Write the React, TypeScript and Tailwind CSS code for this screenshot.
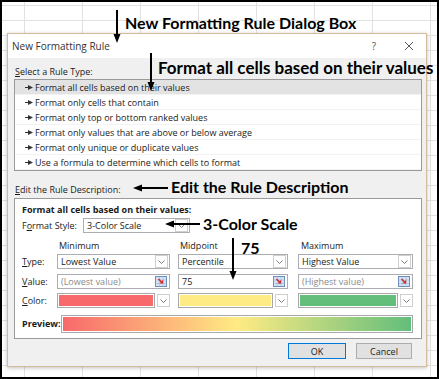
import React from "react";

const rules = [
  "Format all cells based on their values",
  "Format only cells that contain",
  "Format only top or bottom ranked values",
  "Format only values that are above or below average",
  "Format only unique or duplicate values",
  "Use a formula to determine which cells to format",
];

const Chevron = () => (
  <svg width="7" height="4" viewBox="0 0 7 4" fill="none">
    <polyline points="0.5,0.5 3.5,3.5 6.5,0.5" stroke="#707070" strokeWidth="0.9" />
  </svg>
);

const DropButton = () => (
  <span className="flex h-[13px] w-[13px] shrink-0 items-center justify-center border border-[#cfcfcf] bg-white">
    <Chevron />
  </span>
);

const RangeIcon = () => (
  <span className="flex h-[13px] w-[14px] shrink-0 items-center justify-center">
    <svg width="12" height="11" viewBox="0 0 12 11">
      <rect x="0.5" y="0.5" width="11" height="10" fill="#d6e4f5" stroke="#6c8cbc" />
      <path d="M0.5 4h11M0.5 7.5h11M4.2 0.5v10M8 0.5v10" stroke="#9fb6d8" strokeWidth="0.6" />
      <path d="M3.5 3l4 4" stroke="#d42a2a" strokeWidth="1.6" />
      <path d="M8.2 3.8v3.6H4.6z" fill="#d42a2a" />
    </svg>
  </span>
);

const Dropdown = ({ text, w }: { text: string; w: string }) => (
  <div className={`flex h-[15px] items-center border border-[#abadb3] bg-white pl-[3px] pr-px ${w}`}>
    <span className="flex-1 whitespace-nowrap leading-[13px]">{text}</span>
    <DropButton />
  </div>
);

const ValueBox = ({ text, muted, w }: { text: string; muted?: boolean; w: string }) => (
  <div className={`flex h-[15px] items-center border border-[#abadb3] bg-white pl-[3px] pr-px ${w}`}>
    <span className={`flex-1 whitespace-nowrap leading-[13px] ${muted ? "text-[#8a8a8a]" : ""}`}>{text}</span>
    <RangeIcon />
  </div>
);

const Swatch = ({ color, w }: { color: string; w: string }) => (
  <div className={`flex h-[15px] items-center gap-[2px] ${w}`}>
    <div className="h-full flex-1 border border-[#a8a8a8] bg-white p-px">
      <div className={`h-full w-full ${color}`} />
    </div>
    <DropButton />
  </div>
);

const DownArrow = ({ x, y, h }: { x: number; y: number; h: number }) => (
  <svg
    className="absolute z-20"
    style={{ left: x - 5, top: y }}
    width="10"
    height={h}
    viewBox={`0 0 10 ${h}`}
  >
    <line x1="5" y1="0" x2="5" y2={h - 6} stroke="#000" strokeWidth="2" />
    <path d={`M1.5 ${h - 9} L8.5 ${h - 9} L5 ${h} Z`} fill="#000" />
  </svg>
);

const LeftArrow = ({ x, y, w }: { x: number; y: number; w: number }) => (
  <svg
    className="absolute z-20"
    style={{ left: x, top: y - 5 }}
    width={w}
    height="10"
    viewBox={`0 0 ${w} 10`}
  >
    <line x1="6" y1="5" x2={w} y2="5" stroke="#000" strokeWidth="2" />
    <path d="M0 5 L9 1.5 L9 8.5 Z" fill="#000" />
  </svg>
);

export default function App() {
  return (
    <div className="relative h-[379px] w-[439px] overflow-hidden bg-white font-['Open_Sans',sans-serif] text-[9px] text-[#1a1a1a]">
      {/* sheet grid behind the dialog */}
      <div className="absolute inset-0 bg-[linear-gradient(to_bottom,#e2e2e2_1px,transparent_1px),linear-gradient(to_right,#e2e2e2_1px,transparent_1px)] [background-position:24px_5px] [background-size:58px_15px]" />

      {/* dialog */}
      <div className="relative z-10 ml-[7px] mt-[33px] flex h-[334px] w-[420px] flex-col border border-[#d4bc98] bg-[#f0f0f0] shadow-[0_1px_4px_rgba(0,0,0,0.25)]">
        <div className="flex h-[24px] items-center bg-white pl-[4px] pr-[12px] text-[10px] text-[#333]">
          <span className="flex-1">New Formatting Rule</span>
          <span className="mr-[28px] text-[10px] text-[#555]">?</span>
          <svg width="10" height="10" viewBox="0 0 10 10">
            <path d="M1 1L9 9M9 1L1 9" stroke="#444" strokeWidth="0.9" />
          </svg>
        </div>

        <div className="flex flex-col px-[6px]">
          <div className="mt-[8px] h-[12px] pl-px leading-[12px]">
            <u>S</u>elect a Rule Type:
          </div>
          <div className="mt-px flex h-[92px] w-[408px] flex-col border border-[#9a9a9a] bg-white">
            {rules.map((r, i) => (
              <div
                key={r}
                className={`flex h-[15px] items-center gap-[2px] border-b border-[#f3f3f3] pl-[10px] leading-[13px] ${
                  i === 0 ? "bg-[#e3e3e3]" : ""
                }`}
              >
                <svg width="8" height="5" viewBox="0 0 8 5">
                  <line x1="0" y1="2.5" x2="4" y2="2.5" stroke="#333" strokeWidth="1" />
                  <path d="M3 0 L8 2.5 L3 5 Z" fill="#333" />
                </svg>
                <span>{r}</span>
              </div>
            ))}
          </div>

          <div className="mt-[13px] h-[12px] pl-px leading-[12px]">
            <u>E</u>dit the Rule Description:
          </div>
          <div className="mt-[2px] flex h-[141px] w-[408px] flex-col border border-[#9a9a9a] bg-white px-[7px]">
            <div className="mt-[5px] h-[12px] font-bold leading-[12px]">Format all cells based on their values:</div>
            <div className="mt-[2px] flex items-center">
              <span className="w-[61px]">
                F<u>o</u>rmat Style:
              </span>
              <Dropdown text="3-Color Scale" w="w-[107px]" />
            </div>

            <div className="mt-[7px] flex h-[12px] items-center leading-[12px]">
              <span className="w-[35px]" />
              <span className="w-[121px] pl-[2px]">Minimum</span>
              <span className="w-[120px] pl-[2px]">Midpoint</span>
              <span className="pl-[3px]">Maximum</span>
            </div>

            <div className="mt-[2px] flex items-center">
              <span className="w-[35px]">
                <u>T</u>ype:
              </span>
              <Dropdown text="Lowest Value" w="w-[113px]" />
              <span className="w-[8px]" />
              <Dropdown text="Percentile" w="w-[110px]" />
              <span className="w-[10px]" />
              <Dropdown text="Highest Value" w="w-[115px]" />
            </div>

            <div className="mt-[5px] flex items-center">
              <span className="w-[35px]">
                <u>V</u>alue:
              </span>
              <ValueBox text="(Lowest value)" muted w="w-[113px]" />
              <span className="w-[8px]" />
              <ValueBox text="75" w="w-[110px]" />
              <span className="w-[10px]" />
              <ValueBox text="(Highest value)" muted w="w-[115px]" />
            </div>

            <div className="mt-[4px] flex items-center">
              <span className="w-[35px]">
                <u>C</u>olor:
              </span>
              <Swatch color="bg-[#f8696b]" w="w-[113px]" />
              <span className="w-[8px]" />
              <Swatch color="bg-[#ffeb84]" w="w-[110px]" />
              <span className="w-[10px]" />
              <Swatch color="bg-[#63be7b]" w="w-[115px]" />
            </div>

            <div className="mt-[7px] flex items-center">
              <span className="w-[39px] font-bold">Preview:</span>
              <div className="h-[18px] w-[352px] border border-[#a8a8a8] bg-white p-px">
                <div className="h-full w-full bg-[linear-gradient(to_right,#f8696b,#ffeb84_50%,#63be7b)]" />
              </div>
            </div>
          </div>

          <div className="mt-[4px] flex justify-end gap-[10px] pr-[8px]">
            <button className="flex h-[16px] w-[58px] items-center justify-center border border-[#0078d7] bg-[#e1e1e1] text-[9px] leading-none">
              OK
            </button>
            <button className="flex h-[16px] w-[56px] items-center justify-center border border-[#adadad] bg-[#e1e1e1] text-[9px] leading-none">
              Cancel
            </button>
          </div>
        </div>
      </div>

      {/* annotations */}
      <DownArrow x={117} y={10} h={33} />
      <div className="absolute left-[125px] top-[13px] z-20 whitespace-nowrap font-['Lato',sans-serif] text-[16px] font-bold leading-[20px] text-black">
        New Formatting Rule Dialog Box
      </div>

      <DownArrow x={151} y={53} h={38} />
      <div className="absolute left-[158px] top-[57px] z-20 whitespace-nowrap font-['Lato',sans-serif] text-[17px] font-bold leading-[21px] text-black">
        Format all cells based on their values
      </div>

      <LeftArrow x={133} y={188} w={35} />
      <div className="absolute left-[171px] top-[177px] z-20 whitespace-nowrap font-['Lato',sans-serif] text-[16px] font-bold leading-[20px] text-black">
        Edit the Rule Description
      </div>

      <LeftArrow x={165} y={224} w={35} />
      <div className="absolute left-[203px] top-[214px] z-20 whitespace-nowrap font-['Lato',sans-serif] text-[16px] font-bold leading-[20px] text-black">
        3-Color Scale
      </div>

      <DownArrow x={233} y={238} h={42} />
      <div className="absolute left-[241px] top-[238px] z-20 whitespace-nowrap font-['Lato',sans-serif] text-[16px] font-bold leading-[20px] text-black">
        75
      </div>

      <div className="pointer-events-none absolute inset-0 z-30 border-2 border-black" />
    </div>
  );
}
